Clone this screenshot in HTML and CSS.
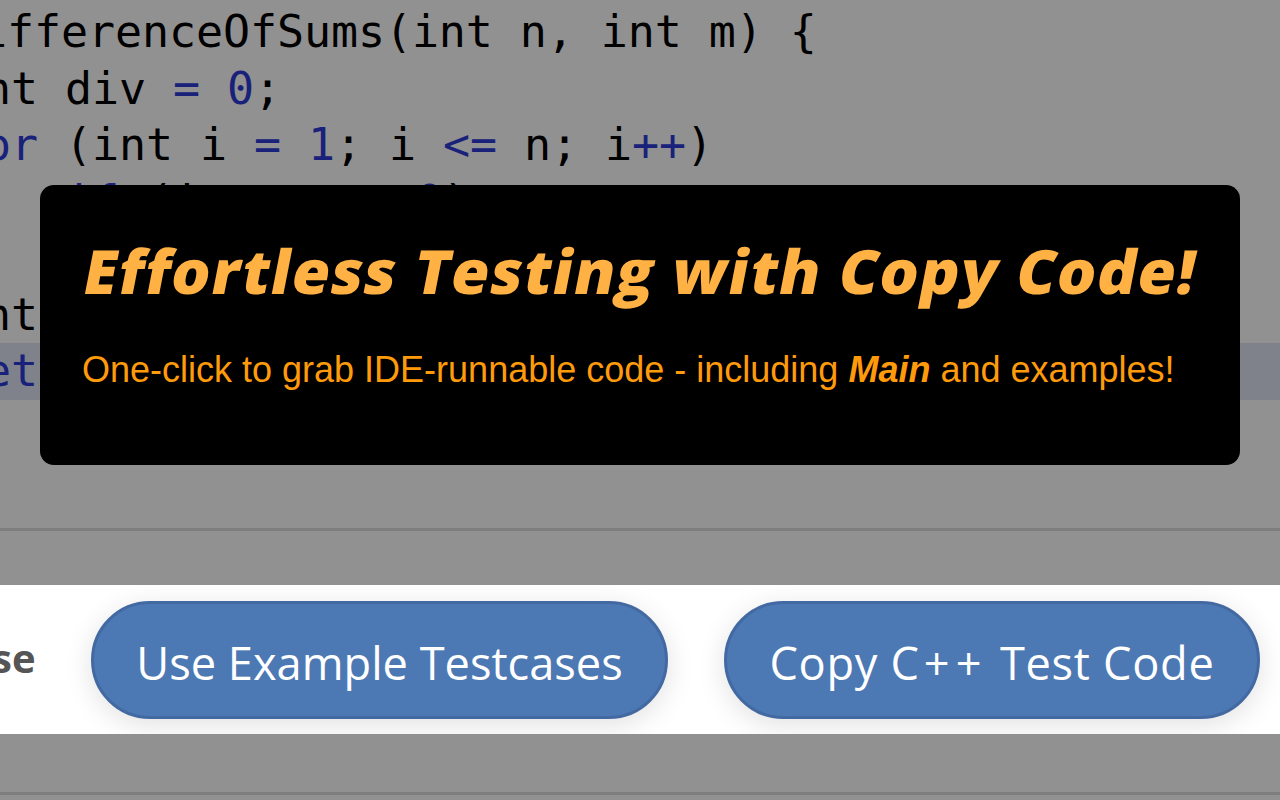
FILE: index.html
```html
<!DOCTYPE html>
<html lang="en">
<head>
<meta charset="utf-8">
<title>Effortless Testing</title>
<link rel="stylesheet" href="styles.css">
</head>
<body>
<main class="page">
  <div class="code">
    <div class="line line-first">ifferenceOfSums(int n, int m) {</div>
    <div class="line">nt div <b class="op">=</b> <b class="num">0</b>;</div>
    <div class="line"><b class="kw">or</b> (int i <b class="op">=</b> <b class="num">1</b>; i <b class="op">&lt;=</b> n; i<b class="op">++</b>)</div>
    <div class="line">   <b class="kw">if</b> (i <b class="op">%</b> m <b class="op">==</b> <b class="num">0</b>)</div>
    <div class="line"> </div>
    <div class="line">nt</div>
    <div class="line hl"><b class="kw">et</b></div>
  </div>
  <div class="rule rule-a"></div>
  <div class="bar">
    <span class="label">se</span>
    <button class="btn btn-a">Use Example Testcases</button>
    <button class="btn btn-b">Copy C<span class="plus">++</span> Test Code</button>
  </div>
  <div class="rule rule-b"></div>
  <div class="scrim"></div>
  <section class="promo">
    <h1 class="title">Effortless Testing with Copy Code!</h1>
    <p class="sub">One-click to grab IDE-runnable code - including <em>Main</em> and examples!</p>
  </section>
</main>
</body>
</html>
```
FILE: styles.css
```css
html, body { margin: 0; padding: 0; height: 100%; overflow: hidden; background: #fff; }
.page { position: relative; width: 1280px; height: 800px; overflow: hidden; background: #fff; }
.code { padding-top: 4px; font: 45px/56.5px "DejaVu Sans Mono", monospace; letter-spacing: -.1px; color: #000; height: 528px; box-sizing: border-box; overflow: hidden; }
.line { height: 56.5px; text-indent: -16px; white-space: pre; }
.line-first { text-indent: -20px; }
.code b { font-weight: 400; }
.op, .num, .kw { color: #2c3ad6; }
.hl { background: #dfe5f5; }
.rule { height: 3px; background: #ddd; }
.bar { margin-top: 54px; height: 149px; display: flex; align-items: center; background: #fff; position: relative; z-index: 5; overflow: hidden; font-family: "Open Sans", sans-serif; }
.label { font-size: 40px; font-weight: 700; color: #555; margin-left: -8px; width: 99px; flex: none; position: relative; top: -2px; }
.btn { flex: none; height: 118px; border-radius: 59px; border: 3px solid #4369a3; background: #4c78b3; color: #fff; font: 45.2px "Open Sans", sans-serif; padding: 5px 0 0; box-shadow: 0 6px 28px rgba(0,0,0,.12); }
.btn-a { width: 577px; }
.btn-b { width: 536px; margin-left: 56px; letter-spacing: .7px; }
.plus { letter-spacing: 6px; margin: 0 0 0 4px; }
.rule-b { margin-top: 58px; }
.scrim { position: absolute; inset: 0; background: rgba(0,0,0,.43); z-index: 3; }
.promo { position: absolute; z-index: 6; left: 40px; top: 185px; width: 1200px; height: 280px; box-sizing: border-box; padding: 0 42px; background: #000; border-radius: 14px; }
.title { margin: 50px 0 0; font: 800 61px/72px "Open Sans", sans-serif; letter-spacing: 1.35px; color: #ffb143; white-space: nowrap; transform: skewX(-11deg); transform-origin: 0 70%; }
.sub { margin: 40px 0 0; font: 36px/46px "Liberation Sans", Arial, sans-serif; color: #ff9b0a; white-space: nowrap; }
.sub em { font-weight: 700; }
```
